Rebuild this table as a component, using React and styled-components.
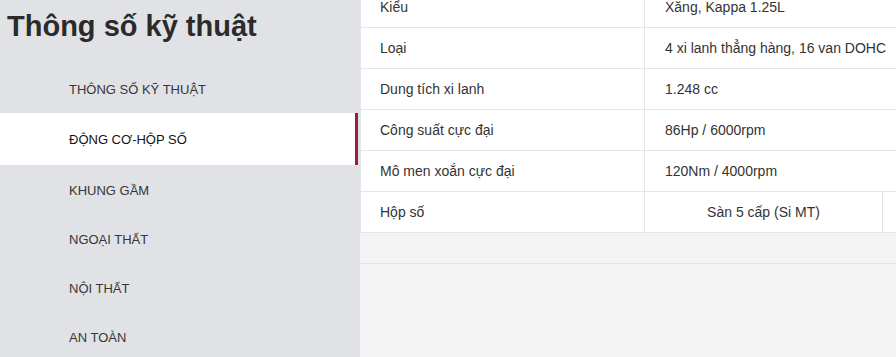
import React from "react";
import styled, { createGlobalStyle } from "styled-components";

const specs = [
  { label: "Kiểu", value: "Xăng, Kappa 1.25L" },
  { label: "Loại", value: "4 xi lanh thẳng hàng, 16 van DOHC" },
  { label: "Dung tích xi lanh", value: "1.248 cc" },
  { label: "Công suất cực đại", value: "86Hp / 6000rpm" },
  { label: "Mô men xoắn cực đại", value: "120Nm / 4000rpm" },
];

const menu = [
  "Thông số kỹ thuật",
  "Động cơ-hộp số",
  "Khung gầm",
  "Ngoại thất",
  "Nội thất",
  "An toàn",
];

const GlobalStyle = createGlobalStyle`
  html, body {
    margin: 0;
    padding: 0;
    background: #f4f4f5;
  }
  body {
    font-family: "Liberation Sans", Arial, sans-serif;
  }
`;

const Page = styled.div`
  display: flex;
  width: 896px;
  height: 357px;
  overflow: hidden;
`;

const Sidebar = styled.aside`
  flex: 0 0 360px;
  display: flex;
  flex-direction: column;
  overflow: hidden;
  background: #e1e2e6;
`;

const Title = styled.h2`
  flex-shrink: 0;
  margin: 0;
  height: 64px;
  box-sizing: border-box;
  padding: 10px 0 0 7px;
  font-size: 29px;
  line-height: 33px;
  font-weight: 700;
  color: #2b2b2b;
`;

const MenuItem = styled.div`
  flex-shrink: 0;
  display: flex;
  align-items: center;
  height: ${(p) => (p.$active ? "52px" : "49px")};
  margin-right: 2px;
  padding-left: 69px;
  padding-top: 1px;
  box-sizing: border-box;
  font-size: 13px;
  text-transform: uppercase;
  color: ${(p) => (p.$active ? "#111" : "#363636")};
  background: ${(p) => (p.$active ? "#fff" : "transparent")};
  border-right: 3px solid ${(p) => (p.$active ? "#9d1c3a" : "transparent")};
`;

const Content = styled.main`
  flex: 1;
  min-width: 0;
  overflow: hidden;
  background: #f4f4f5;
`;

const Table = styled.table`
  width: 622px;
  margin-top: -13px;
  border-spacing: 0;
  table-layout: fixed;
  background: #fff;
  border-left: 1px solid #e4e5e7;
`;

const Cell = styled.td`
  height: 40px;
  padding: 0 0 0 ${(p) => (p.$center ? "0" : "19px")};
  box-sizing: content-box;
  font-size: 14px;
  color: #333;
  white-space: nowrap;
  text-align: ${(p) => (p.$center ? "center" : "left")};
  border-bottom: 1px solid #e4e5e7;
  border-right: 1px solid #e4e5e7;
`;

const ValueCell = styled(Cell)`
  padding-left: ${(p) => (p.$center ? "0" : "20px")};
`;

const Footer = styled.div`
  width: 100%;
  height: 30px;
  background: #f3f3f4;
  border-bottom: 1px solid #e3e4e6;
`;

export default function App() {
  return (
    <>
      <GlobalStyle />
      <Page>
        <Sidebar>
          <Title>Thông số kỹ thuật</Title>
          {menu.map((item, i) => (
            <MenuItem key={item} $active={i === 1}>
              {item}
            </MenuItem>
          ))}
        </Sidebar>
        <Content>
          <Table>
            <colgroup>
              <col style={{ width: 284 }} />
              <col style={{ width: 238 }} />
              <col style={{ width: 100 }} />
            </colgroup>
            <tbody>
              {specs.map((s) => (
                <tr key={s.label}>
                  <Cell>{s.label}</Cell>
                  <ValueCell colSpan={2}>{s.value}</ValueCell>
                </tr>
              ))}
              <tr>
                <Cell>Hộp số</Cell>
                <ValueCell $center>Sàn 5 cấp (Si MT)</ValueCell>
                <Cell />
              </tr>
            </tbody>
          </Table>
          <Footer />
        </Content>
      </Page>
    </>
  );
}
